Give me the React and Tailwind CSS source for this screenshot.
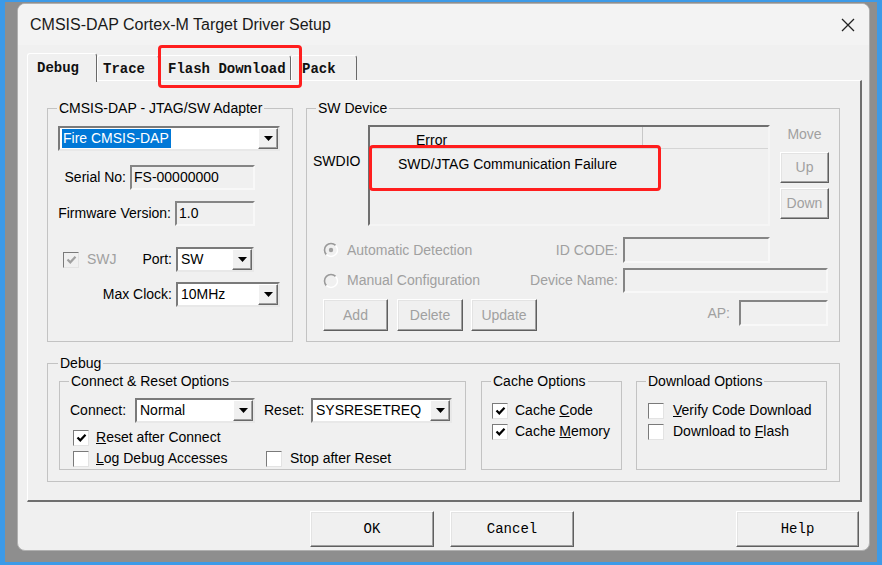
import React from 'react'

const Arrow = () => (
  <div className="w-[20px] h-full shrink-0 flex items-center justify-center bg-[#f0f0f0] border border-t-white border-l-white border-r-[#696969] border-b-[#696969] shadow-[inset_-1px_-1px_0_#a0a0a0]">
    <svg width="9" height="5" viewBox="0 0 9 5">
      <path d="M0 0h9L4.5 5z" fill="#000" />
    </svg>
  </div>
)

const Combo = ({ value, w, selected }) => (
  <div className={`flex h-[25px] bg-white border-2 border-t-[#7a7a7a] border-l-[#7a7a7a] border-r-[#e8e8e8] border-b-[#e8e8e8] ${w}`}>
    <div className="flex-1 flex items-center pl-[2px] min-w-0 overflow-hidden whitespace-nowrap">
      {selected ? (
        <span className="bg-[#0078d7] text-white pl-[1px] pr-[2px] leading-[19px]">{value}</span>
      ) : (
        <span className="pl-[1px]">{value}</span>
      )}
    </div>
    <Arrow />
  </div>
)

const Field = ({ w, h = 'h-[25px]', children }) => (
  <div className={`${w} ${h} shrink-0 flex items-center pl-[2px] bg-[#f0f0f0] border-2 border-t-[#858585] border-l-[#858585] border-r-[#f8f8f8] border-b-[#f8f8f8]`}>
    {children}
  </div>
)

const Check = ({ checked, disabled, className = '' }) => (
  <div className={`w-[16px] h-[16px] shrink-0 flex items-center justify-center border border-t-[#7a7a7a] border-l-[#7a7a7a] border-r-[#e3e3e3] border-b-[#e3e3e3] ${disabled ? 'bg-[#f0f0f0]' : 'bg-white'} ${className}`}>
    {checked && (
      <svg width="11" height="10" viewBox="0 0 11 10">
        <path d="M1.5 4.5L4.3 7.3L9.5 1.8" fill="none" stroke={disabled ? '#a0a0a0' : '#000'} strokeWidth="2.2" />
      </svg>
    )}
  </div>
)

const Radio = ({ checked, className = '' }) => (
  <svg width="16" height="16" viewBox="0 0 16 16" className={`shrink-0 ${className}`}>
    <circle cx="8" cy="8" r="6.5" fill="#f0f0f0" />
    <path d="M3.4 12.6A6.5 6.5 0 0 1 12.6 3.4" stroke="#9a9a9a" strokeWidth="1.6" fill="none" />
    <path d="M12.6 3.4A6.5 6.5 0 0 1 3.4 12.6" stroke="#ffffff" strokeWidth="1.4" fill="none" />
    {checked && <circle cx="8" cy="8" r="2.2" fill="#a0a0a0" />}
  </svg>
)

const Btn = ({ className, disabled, mono, children }) => (
  <div
    className={`shrink-0 flex items-center justify-center bg-[#f0f0f0] border border-t-white border-l-white border-r-[#5f5f5f] border-b-[#5f5f5f] shadow-[inset_-1px_-1px_0_#a0a0a0,inset_1px_1px_0_#e3e3e3] ${disabled ? 'text-[#a0a0a0]' : 'text-black'} ${mono ? "font-['Liberation_Mono',monospace]" : ''} ${className}`}
  >
    {children}
  </div>
)

const Group = ({ label, className, legendClass = 'ml-[9px]', children }) => (
  <fieldset className={`shrink-0 border border-[#c3c3c3] ${className}`}>
    <legend className={`px-[2px] leading-[16px] ${legendClass}`}>{label}</legend>
    {children}
  </fieldset>
)

const tabs = [
  { name: 'Debug', w: 'w-[70px]', pl: 'pl-[9px]', active: true },
  { name: 'Trace', w: 'w-[62px]', pl: 'pl-[5px]' },
  { name: 'Flash Download', w: 'w-[132px]', pl: 'pl-[8px]' },
  { name: 'Pack', w: 'w-[66px]', pl: 'pl-[10px]' },
]

export default function App() {
  return (
    <div className="w-[882px] h-[565px] bg-[#3c9ae8] pt-[2px] px-[5px] pb-[3px] font-['Liberation_Sans',Arial,sans-serif] text-[14px] text-black">
      <div className="h-[560px] bg-[#8e8e8e] pl-[12px] pt-[1px]">
        <div className="w-[853px] h-[548px] rounded-[8px] border border-[#b0b0b0] bg-[#f0f0f0] flex flex-col overflow-hidden">
          {/* Title bar */}
          <div className="h-[41px] shrink-0 bg-[#f3f3f3] flex items-center justify-between pl-[12px] pr-[14px]">
            <span className="text-[16px] text-[#1a1a1a]">CMSIS-DAP Cortex-M Target Driver Setup</span>
            <svg width="14" height="14" viewBox="0 0 14 14">
              <path d="M1 1L13 13M13 1L1 13" stroke="#222" strokeWidth="1.3" />
            </svg>
          </div>

          <div className="flex-1 pl-[9px] pt-[8px]">
            {/* Tabs */}
            <div className="relative flex items-end h-[27px] font-['Liberation_Mono',monospace] font-bold text-[14px] text-[#111]">
              {tabs.map((t) =>
                t.active ? (
                  <div
                    key={t.name}
                    className={`relative z-10 h-[29px] mb-[-2px] pt-[5px] leading-[18px] bg-[#f0f0f0] border-l border-t border-r border-l-white border-t-white border-r-[#696969] rounded-t-[3px] ${t.w} ${t.pl}`}
                  >
                    {t.name}
                  </div>
                ) : (
                  <div
                    key={t.name}
                    className={`h-[25px] pt-[4px] leading-[18px] border-l border-t border-r border-l-white border-t-white border-r-[#696969] rounded-t-[3px] whitespace-nowrap ${t.w} ${t.pl}`}
                  >
                    {t.name}
                  </div>
                )
              )}
              <div className="absolute left-[131px] top-[-8px] w-[144px] h-[43px] border-[3px] border-[#ff1e1e] rounded-[4px] z-20" />
            </div>

            {/* Tab panel */}
            <div className="w-[835px] h-[422px] border-l border-t border-l-white border-t-white border-r-2 border-b-2 border-r-[#6f6f6f] border-b-[#6f6f6f] pt-[19px] pl-[19px]">
              <div className="flex">
                {/* Adapter */}
                <Group label="CMSIS-DAP - JTAG/SW Adapter" className="w-[246px] h-[242px]">
                  <Combo value="Fire CMSIS-DAP" w="ml-[10px] mt-[10px] w-[222px]" selected />
                  <div className="flex items-center mt-[14px]">
                    <span className="w-[78px] text-right">Serial No:</span>
                    <div className="ml-[4px]">
                      <Field w="w-[125px]">FS-00000000</Field>
                    </div>
                  </div>
                  <div className="flex items-center mt-[11px]">
                    <span className="w-[123px] text-right">Firmware Version:</span>
                    <div className="ml-[4px]">
                      <Field w="w-[80px]">1.0</Field>
                    </div>
                  </div>
                  <div className="flex items-center mt-[21px]">
                    <div className="w-[124px] flex items-center">
                      <Check checked disabled className="ml-[15px]" />
                      <span className="ml-[8px] text-[#a0a0a0]">SWJ</span>
                      <span className="ml-auto">Port:</span>
                    </div>
                    <Combo value="SW" w="ml-[4px] w-[78px]" />
                  </div>
                  <div className="flex items-center mt-[10px]">
                    <span className="w-[124px] text-right">Max Clock:</span>
                    <Combo value="10MHz" w="ml-[4px] w-[104px]" />
                  </div>
                </Group>

                {/* SW Device */}
                <Group label="SW Device" className="ml-[13px] w-[534px] h-[242px]">
                  <div className="flex mt-[9px]">
                    <div className="w-[61px] pl-[6px] pt-[27px] leading-[18px]">SWDIO</div>
                    <div className="relative w-[402px] h-[101px] bg-[#f0f0f0] border-2 border-t-[#6f6f6f] border-l-[#6f6f6f] border-r-[#f5f5f5] border-b-[#f5f5f5]">
                      <div className="flex h-[22px] border-b border-[#d5d5d5]">
                        <div className="w-[273px] border-r border-[#c8c8c8] pl-[46px] pt-[4px] leading-[19px]">Error</div>
                      </div>
                      <div className="pl-[28px] pt-[6px] leading-[18px]">SWD/JTAG Communication Failure</div>
                      <div className="absolute left-[-1px] top-[18px] w-[292px] h-[46px] border-[3px] border-[#ff1e1e] rounded-[4px]" />
                    </div>
                    <div className="ml-[10px] w-[49px] flex flex-col">
                      <div className="text-center leading-[18px] text-[#a0a0a0]">Move</div>
                      <Btn disabled className="mt-[9px] h-[31px] w-[49px]">Up</Btn>
                      <Btn disabled className="mt-[5px] h-[31px] w-[49px]">Down</Btn>
                    </div>
                  </div>
                  <div className="flex items-center mt-[11px] h-[26px]">
                    <div className="w-[316px] flex items-center text-[#a0a0a0]">
                      <Radio checked className="ml-[16px]" />
                      <span className="ml-[8px]">Automatic Detection</span>
                      <span className="ml-auto mr-[5px]">ID CODE:</span>
                    </div>
                    <Field w="w-[147px]" h="h-[26px]" />
                  </div>
                  <div className="flex items-center mt-[5px] h-[25px]">
                    <div className="w-[316px] flex items-center text-[#a0a0a0]">
                      <Radio className="ml-[16px]" />
                      <span className="ml-[8px]">Manual Configuration</span>
                      <span className="ml-auto mr-[5px]">Device Name:</span>
                    </div>
                    <Field w="w-[205px]" />
                  </div>
                  <div className="flex items-start mt-[6px] w-[521px]">
                    <Btn disabled className="ml-[16px] w-[65px] h-[32px]">Add</Btn>
                    <Btn disabled className="ml-[9px] w-[66px] h-[32px]">Delete</Btn>
                    <Btn disabled className="ml-[8px] w-[66px] h-[32px]">Update</Btn>
                    <div className="ml-auto mt-[1px] flex items-center">
                      <span className="mr-[9px] text-[#a0a0a0]">AP:</span>
                      <Field w="w-[89px]" h="h-[26px]" />
                    </div>
                  </div>
                </Group>
              </div>

              {/* Debug */}
              <Group label="Debug" legendClass="ml-[10px]" className="mt-[13px] w-[793px] h-[127px]">
                <div className="flex items-start mt-[2px]">
                  <Group label="Connect & Reset Options" className="ml-[11px] w-[407px] h-[97px]">
                    <div className="flex items-center mt-[9px] h-[25px]">
                      <span className="w-[75px] pl-[10px]">Connect:</span>
                      <Combo value="Normal" w="w-[120px]" />
                      <span className="ml-[9px] w-[47px]">Reset:</span>
                      <Combo value="SYSRESETREQ" w="w-[141px]" />
                    </div>
                    <div className="flex items-center mt-[4px] h-[21px]">
                      <Check checked className="ml-[13px]" />
                      <span className="ml-[7px]"><u>R</u>eset after Connect</span>
                    </div>
                    <div className="flex items-center h-[21px]">
                      <div className="w-[206px] flex items-center">
                        <Check className="ml-[13px]" />
                        <span className="ml-[7px]"><u>L</u>og Debug Accesses</span>
                      </div>
                      <Check />
                      <span className="ml-[8px]">Stop after Reset</span>
                    </div>
                  </Group>

                  <Group label="Cache Options" className="ml-[15px] w-[141px] h-[97px]">
                    <div className="flex items-center mt-[11px] h-[21px]">
                      <Check checked className="ml-[10px]" />
                      <span className="ml-[7px]">Cache <u>C</u>ode</span>
                    </div>
                    <div className="flex items-center h-[21px]">
                      <Check checked className="ml-[10px]" />
                      <span className="ml-[7px]">Cache <u>M</u>emory</span>
                    </div>
                  </Group>

                  <Group label="Download Options" className="ml-[14px] w-[191px] h-[97px]">
                    <div className="flex items-center mt-[11px] h-[21px]">
                      <Check className="ml-[11px]" />
                      <span className="ml-[9px]"><u>V</u>erify Code Download</span>
                    </div>
                    <div className="flex items-center h-[21px]">
                      <Check className="ml-[11px]" />
                      <span className="ml-[9px]">Download to <u>F</u>lash</span>
                    </div>
                  </Group>
                </div>
              </Group>
            </div>

            {/* Dialog buttons */}
            <div className="flex mt-[9px]">
              <Btn mono className="ml-[283px] w-[124px] h-[36px]">OK</Btn>
              <Btn mono className="ml-[16px] w-[124px] h-[36px]">Cancel</Btn>
              <Btn mono className="ml-[162px] w-[123px] h-[36px]">Help</Btn>
            </div>
          </div>
        </div>
      </div>
    </div>
  )
}
